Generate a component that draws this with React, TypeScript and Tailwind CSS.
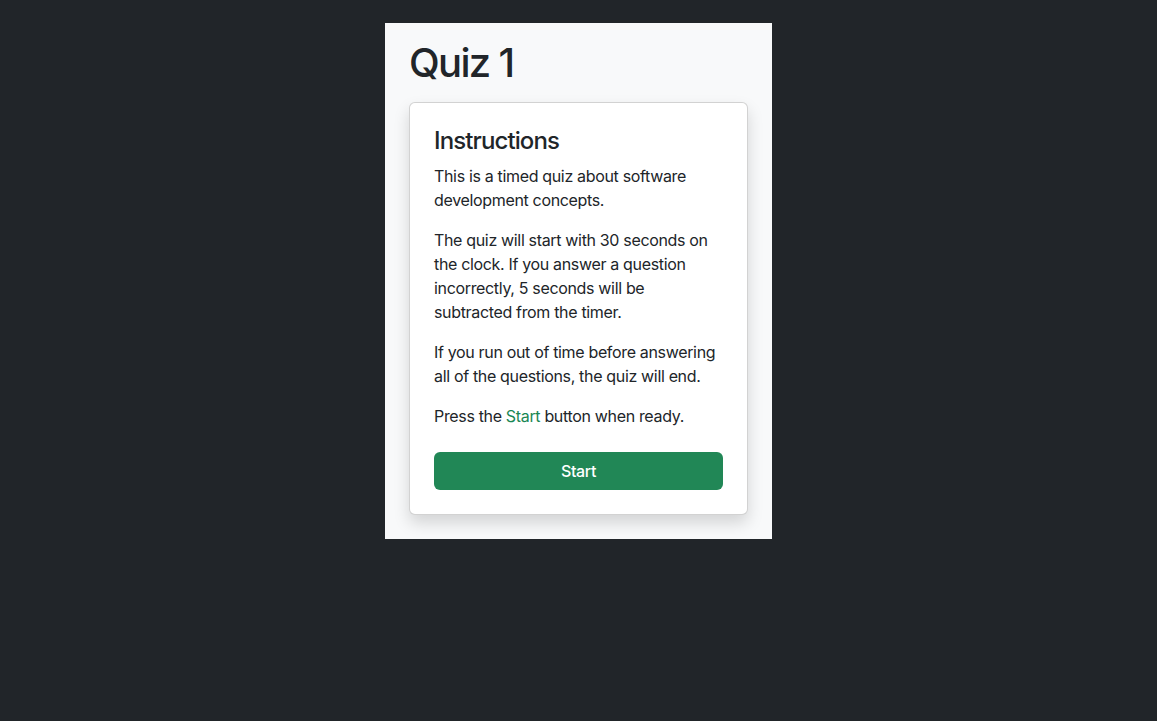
import React from "react";

export default function App() {
  return (
    <div
      className="min-h-[721px] w-full bg-[#212529] flex justify-center pt-[23px]"
      style={{ fontFamily: "Inter, 'Noto Sans', 'Liberation Sans', sans-serif" }}
    >
      <div className="w-[387px] self-start bg-[#f8f9fa] px-6 pt-4 pb-6 text-[#212529]">
        <h1 className="text-[40px] leading-[48px] font-medium tracking-[-0.042em] mb-[15px]">Quiz 1</h1>
        <div className="bg-white border border-[rgba(0,0,0,0.175)] rounded-[6px] shadow-[0_8px_16px_rgba(0,0,0,0.15)] p-6 tracking-[-0.021em]">
          <h4 className="text-[24px] leading-[28.8px] font-medium tracking-[-0.037em] mb-2">Instructions</h4>
          <p className="text-base leading-6 mb-4">
            This is a timed quiz about software development concepts.
          </p>
          <p className="text-base leading-6 mb-4">
            The quiz will start with 30 seconds on the clock. If you answer a question incorrectly, 5 seconds will be subtracted from the timer.
          </p>
          <p className="text-base leading-6 mb-4">
            If you run out of time before answering all of the questions, the quiz will end.
          </p>
          <p className="text-base leading-6 mb-6">
            Press the <span className="text-[#198754]">Start</span> button when ready.
          </p>
          <button className="w-full h-[38px] rounded-[6px] bg-[#218756] text-white text-base font-medium">
            Start
          </button>
        </div>
      </div>
    </div>
  );
}
